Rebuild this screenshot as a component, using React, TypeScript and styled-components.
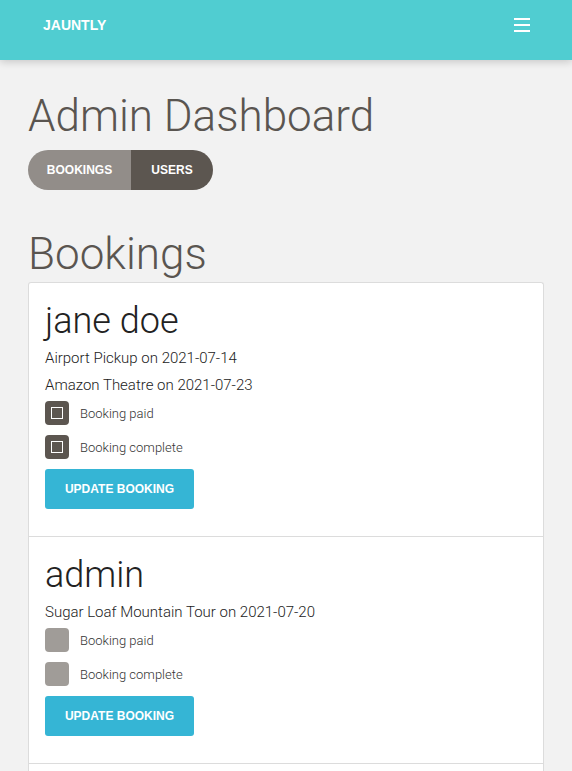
import React from "react";
import styled, { createGlobalStyle } from "styled-components";

const Global = createGlobalStyle`
  html, body { margin: 0; padding: 0; background: #f2f2f2; }
  body { font-family: Roboto, "Liberation Sans", Arial, sans-serif; color: #333; }
  * { box-sizing: border-box; }
`;

const Header = styled.header`
  height: 60px;
  background: #50cdd1;
  display: flex;
  align-items: center;
  justify-content: space-between;
  padding: 0 42px 0 43px;
  box-shadow: 0 2px 8px rgba(0, 0, 0, 0.18);
  position: relative;
`;

const Brand = styled.div`
  font-family: "Liberation Sans", Arial, sans-serif;
  font-weight: 700;
  font-size: 14px;
  color: #fff;
  margin-top: -10px;
`;

const Burger = styled.button`
  width: 16px;
  height: 14px;
  padding: 0;
  border: 0;
  background: transparent;
  display: flex;
  flex-direction: column;
  justify-content: space-between;
  margin-top: -10px;
  span {
    display: block;
    height: 2px;
    background: #fff;
  }
`;

const Main = styled.main`
  padding: 26px 28px 0 28px;
`;

const PageTitle = styled.h1`
  margin: 0;
  font-weight: 300;
  font-size: 44px;
  line-height: 60px;
  color: #5a5550;
`;

const Toggle = styled.div`
  display: inline-flex;
  height: 40px;
  border-radius: 20px;
  overflow: hidden;
  margin-top: 4px;
`;

const ToggleBtn = styled.button<{ $active?: boolean; $w: number }>`
  border: 0;
  height: 40px;
  width: ${(p) => p.$w}px;
  padding: 0;
  background: ${(p) => (p.$active ? "#5c5650" : "#928d89")};
  color: #fff;
  font-family: "Liberation Sans", Arial, sans-serif;
  font-weight: 700;
  font-size: 12px;
  text-transform: uppercase;
`;

const SectionTitle = styled.h2`
  margin: 36px 0 0 0;
  font-weight: 300;
  font-size: 44px;
  line-height: 56px;
  color: #5a5550;
`;

const Card = styled.div`
  background: #fff;
  border: 1px solid #dcdcdc;
  border-radius: 3px;
  border-bottom: 0;
`;

const Entry = styled.div`
  padding: 16px 16px 27px 16px;
  border-bottom: 1px solid #dcdcdc;
`;

const Name = styled.h3`
  margin: 0 0 2px 0;
  font-weight: 300;
  font-size: 36px;
  line-height: 44px;
  color: #222;
`;

const Line = styled.p`
  margin: 0;
  font-size: 15px;
  font-weight: 300;
  line-height: 27px;
  color: #222;
`;

const CheckList = styled.div`
  display: flex;
  flex-direction: column;
  gap: 10px;
  margin-top: 2px;
`;

const CheckRow = styled.label`
  display: flex;
  align-items: center;
  gap: 11px;
  height: 24px;
  font-size: 13px;
  font-weight: 300;
  color: #333;
`;

const Box = styled.span<{ $checked?: boolean }>`
  width: 24px;
  height: 24px;
  border-radius: 4px;
  background: ${(p) => (p.$checked ? "#5c5650" : "#a09c98")};
  display: flex;
  align-items: center;
  justify-content: center;
  &::after {
    content: "";
    display: ${(p) => (p.$checked ? "block" : "none")};
    width: 10px;
    height: 10px;
    border: 1.5px solid #fff;
  }
`;

const UpdateBtn = styled.button`
  margin-top: 10px;
  height: 40px;
  width: 149px;
  border: 0;
  border-radius: 3px;
  background: #35b5d5;
  color: #fff;
  font-family: "Liberation Sans", Arial, sans-serif;
  font-weight: 700;
  font-size: 12px;
`;

type Booking = { name: string; lines: string[]; marked: boolean };

const bookings: Booking[] = [
  {
    name: "jane doe",
    lines: ["Airport Pickup on 2021-07-14", "Amazon Theatre on 2021-07-23"],
    marked: true,
  },
  { name: "admin", lines: ["Sugar Loaf Mountain Tour on 2021-07-20"], marked: false },
  { name: "guest", lines: ["City Tour on 2021-07-25"], marked: false },
];

export default function App() {
  return (
    <>
      <Global />
      <Header>
        <Brand>JAUNTLY</Brand>
        <Burger aria-label="menu">
          <span />
          <span />
          <span />
        </Burger>
      </Header>
      <Main>
        <PageTitle>Admin Dashboard</PageTitle>
        <Toggle>
          <ToggleBtn $w={103}>Bookings</ToggleBtn>
          <ToggleBtn $w={82} $active>
            Users
          </ToggleBtn>
        </Toggle>
        <SectionTitle>Bookings</SectionTitle>
        <Card>
          {bookings.map((b) => (
            <Entry key={b.name}>
              <Name>{b.name}</Name>
              {b.lines.map((l) => (
                <Line key={l}>{l}</Line>
              ))}
              <CheckList>
                <CheckRow>
                  <Box $checked={b.marked} />
                  Booking paid
                </CheckRow>
                <CheckRow>
                  <Box $checked={b.marked} />
                  Booking complete
                </CheckRow>
              </CheckList>
              <UpdateBtn>UPDATE BOOKING</UpdateBtn>
            </Entry>
          ))}
        </Card>
      </Main>
    </>
  );
}
